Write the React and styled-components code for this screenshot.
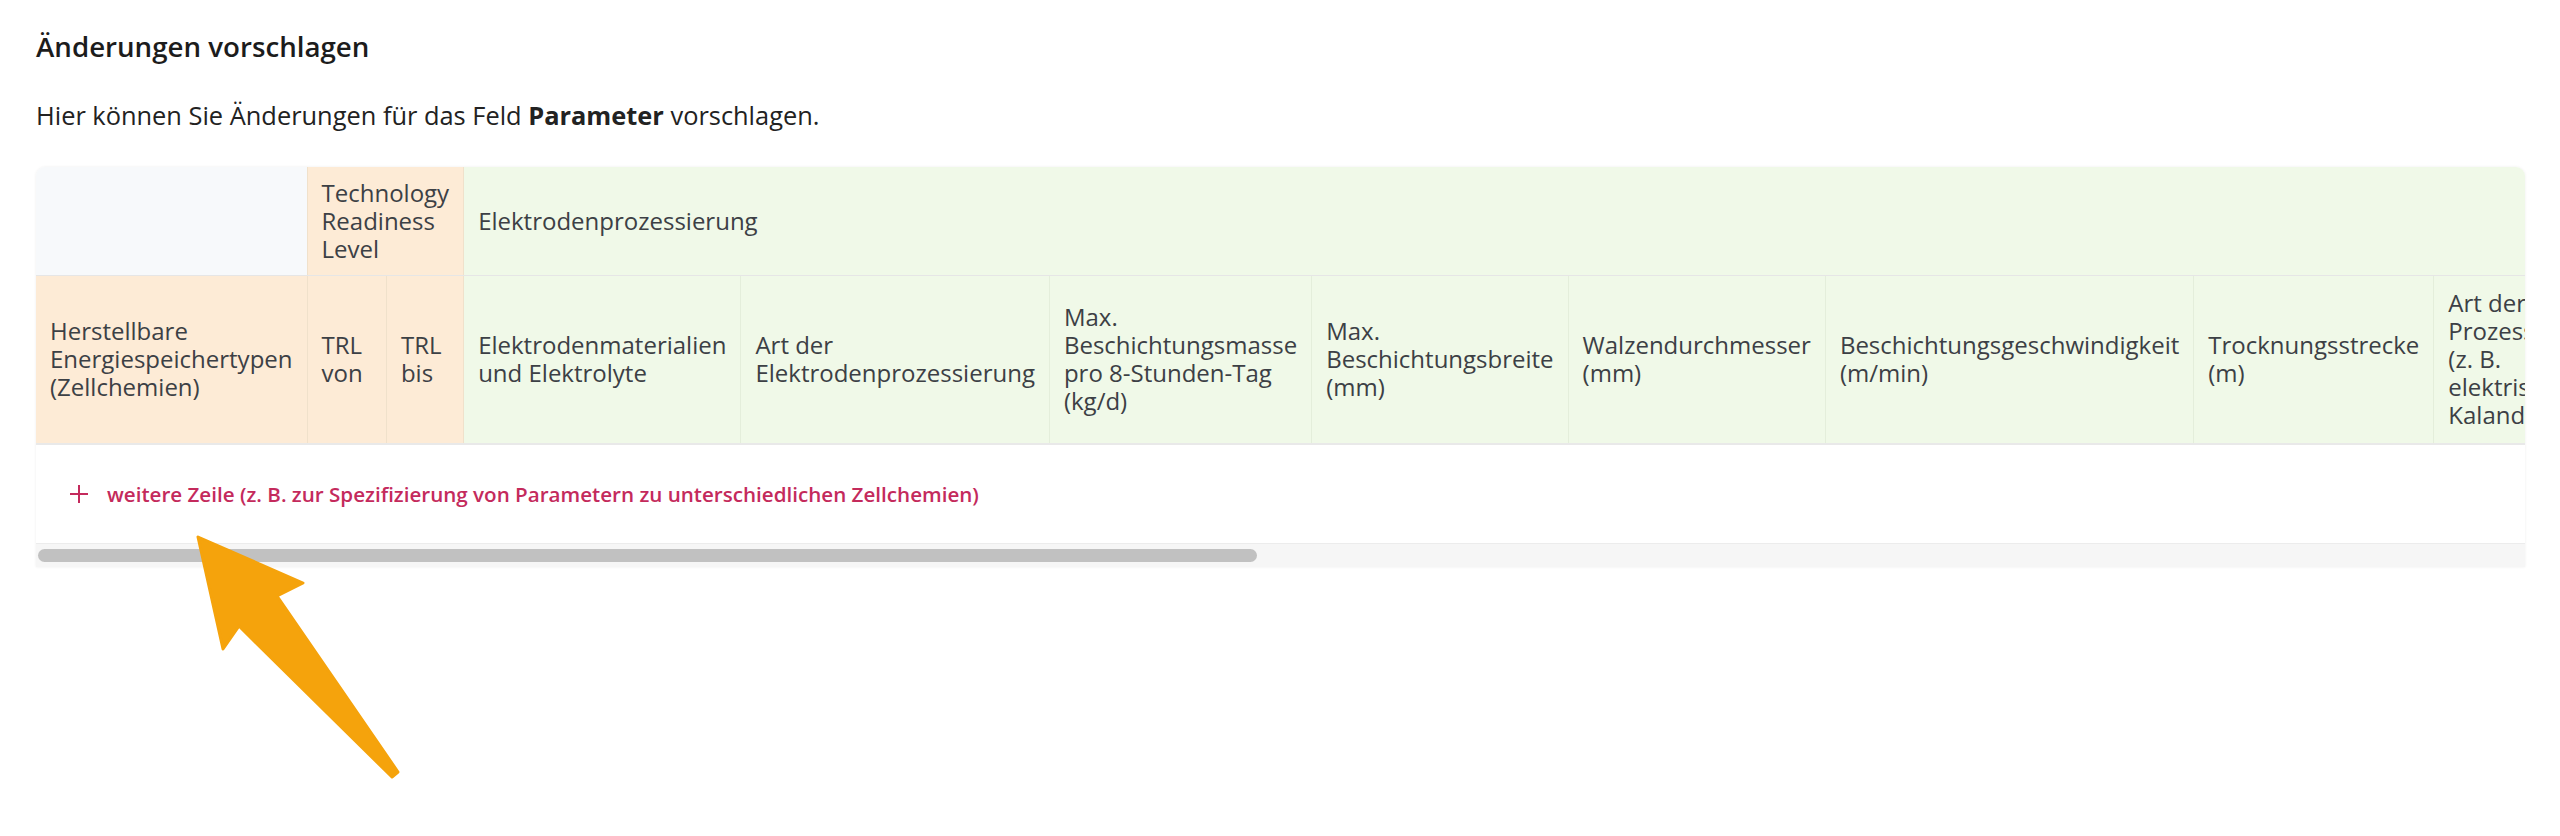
import React from "react";
import styled, { createGlobalStyle } from "styled-components";

const GlobalStyle = createGlobalStyle`
  html, body {
    margin: 0;
    padding: 0;
    background: #ffffff;
  }
  body {
    font-family: "Open Sans", "Noto Sans", sans-serif;
    color: #1f1f1f;
  }
`;

const Page = styled.div`
  position: relative;
  width: 2560px;
  min-height: 836px;
  box-sizing: border-box;
  padding: 28px 35px 0 36px;
`;

const Title = styled.h2`
  margin: 0;
  font-size: 27.7px;
  line-height: 36px;
  font-weight: 600;
  color: #1c1c1c;
`;

const Intro = styled.p`
  margin: 34px 0 0;
  font-size: 25.4px;
  line-height: 34px;
  color: #222222;

  strong {
    font-weight: 700;
  }
`;

const Card = styled.div`
  margin-top: 35px;
  border-radius: 9px 9px 0 0;
  background: #ffffff;
  box-shadow: 0 0 3px rgba(0, 0, 0, 0.07);
  overflow: hidden;
`;

const Scroller = styled.div`
  overflow: hidden;
`;

const Table = styled.table`
  border-collapse: collapse;
  font-size: 24px;
  line-height: 28px;
  color: #3c4045;
`;

const tones = {
  blank: "#f7f9fb",
  orange: "#fdebd6",
  green: "#f0f9e8",
};

const HeadCell = styled.th`
  background: ${(p) => tones[p.tone]};
  padding: ${(p) => (p.last ? "13px 14px 14px" : "12px 14px")};
  text-align: left;
  vertical-align: middle;
  font-weight: 400;
  border-right: 1px solid rgba(90, 110, 80, 0.08);
  border-bottom: ${(p) => (p.last ? "2px solid #e9e9e9" : "1px solid #e6e6e6")};
`;

const BodyCell = styled.td`
  padding: 36px 34px 36px;
  background: #ffffff;
`;

const AddRow = styled.button`
  display: flex;
  align-items: center;
  gap: 19px;
  padding: 0;
  border: 0;
  background: none;
  font-family: "Open Sans", "Noto Sans", sans-serif;
  font-size: 20.6px;
  line-height: 26px;
  font-weight: 600;
  color: #c42a5c;
  cursor: pointer;
  white-space: nowrap;
`;

const Track = styled.div`
  height: 23px;
  border-top: 1px solid #ececec;
  background: #f6f6f6;
  display: flex;
  align-items: center;
  padding-left: 2px;
`;

const Thumb = styled.div`
  width: 49%;
  height: 13px;
  border-radius: 7px;
  background: #c1c1c1;
`;

const Arrow = styled.svg`
  position: absolute;
  left: 0;
  top: 0;
  pointer-events: none;
`;

const columns = [
  "Elektrodenmaterialien und Elektrolyte",
  "Art der Elektrodenprozessierung",
  "Max. Beschichtungsmasse pro 8-Stunden-Tag (kg/d)",
  "Max. Beschichtungsbreite (mm)",
  "Walzendurchmesser (mm)",
  "Beschichtungsgeschwindigkeit (m/min)",
  "Trocknungsstrecke (m)",
  "Art der Prozessierung (z. B. elektrisch, Kalandrieren)",
  "Max. Kalandrierbreite (mm)",
  "Liniendruck beim Kalandrieren (N/mm)",
  "Schneidverfahren (Elektrodenvereinzelung)",
  "Max. Elektrodenlänge (m)",
  "Trocknungstemperatur (°C)",
  "Lösungsmittelrückgewinnung",
  "Bemerkungen",
];

const PlusIcon = () => (
  <svg width="18" height="18" viewBox="0 0 18 18">
    <path d="M9 0v18M0 9h18" stroke="currentColor" strokeWidth="2" fill="none" />
  </svg>
);

export default function App() {
  return (
    <Page>
      <GlobalStyle />
      <Title>Änderungen vorschlagen</Title>
      <Intro>
        Hier können Sie Änderungen für das Feld <strong>Parameter</strong> vorschlagen.
      </Intro>
      <Card>
        <Scroller>
          <Table>
            <thead>
              <tr>
                <HeadCell tone="blank" />
                <HeadCell tone="orange" colSpan={2}>
                  Technology Readiness Level
                </HeadCell>
                <HeadCell tone="green" colSpan={columns.length}>
                  Elektrodenprozessierung
                </HeadCell>
              </tr>
              <tr>
                <HeadCell tone="orange" last>
                  Herstellbare Energiespeichertypen (Zellchemien)
                </HeadCell>
                <HeadCell tone="orange" last>
                  TRL von
                </HeadCell>
                <HeadCell tone="orange" last>
                  TRL bis
                </HeadCell>
                {columns.map((c) => (
                  <HeadCell key={c} tone="green" last>
                    {c}
                  </HeadCell>
                ))}
              </tr>
            </thead>
            <tbody>
              <tr>
                <BodyCell colSpan={columns.length + 3}>
                  <AddRow type="button">
                    <PlusIcon />
                    weitere Zeile (z. B. zur Spezifizierung von Parametern zu unterschiedlichen Zellchemien)
                  </AddRow>
                </BodyCell>
              </tr>
            </tbody>
          </Table>
        </Scroller>
        <Track>
          <Thumb />
        </Track>
      </Card>
      <Arrow width="2560" height="836" viewBox="0 0 2560 836">
        <polygon
          points="198,537 303,583 277,596 398,772 392,777 239,626 223,649"
          fill="#f5a30c"
          stroke="#f5a30c"
          strokeWidth="3"
          strokeLinejoin="round"
        />
      </Arrow>
    </Page>
  );
}
